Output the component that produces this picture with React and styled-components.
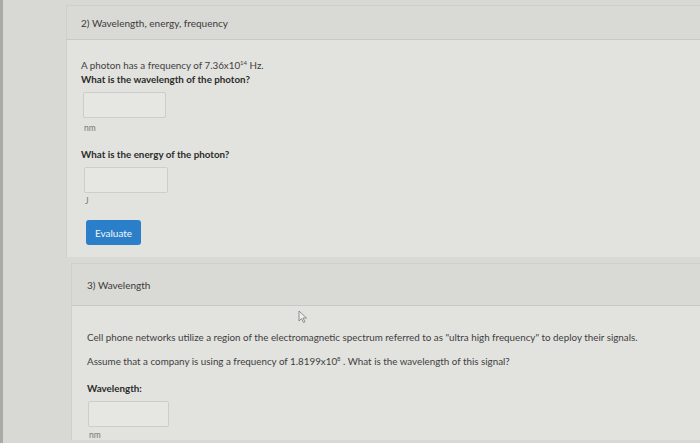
import React from 'react';
import styled, { createGlobalStyle } from 'styled-components';

const Global = createGlobalStyle`
  html, body { margin: 0; padding: 0; }
  body {
    width: 700px;
    height: 443px;
    overflow: hidden;
    background: #d8d8d4;
    font-family: Lato, "Open Sans", sans-serif;
    color: #3a3a3a;
  }
`;

const Page = styled.div`
  display: flex;
  height: 443px;
  border-left: 3px solid #a9a9a6;
  box-sizing: border-box;
`;

const Gutter = styled.div`
  width: ${(p) => p.w}px;
  flex-shrink: 0;
`;

const Column = styled.div`
  flex: 1;
  display: flex;
  flex-direction: column;
  gap: 6px;
  padding-top: 5px;
`;

const Card = styled.section`
  background: #e2e2de;
  border-left: 1px solid #cfcfcb;
  border-top: 1px solid #cfcfcb;
  margin-left: ${(p) => p.indent || 0}px;
`;

const CardHeader = styled.header`
  background: #d9d9d5;
  border-bottom: 1px solid #c8c8c4;
  height: ${(p) => p.h}px;
  display: flex;
  align-items: center;
  padding-left: ${(p) => p.pad}px;
  font-size: 10px;
  color: #3b3b3b;
`;

const CardBody = styled.div`
  padding: ${(p) => p.pad};
  display: flex;
  flex-direction: column;
`;

const Text = styled.p`
  margin: 0;
  font-size: 9.8px;
  line-height: 15px;
  font-weight: ${(p) => (p.bold ? 700 : 400)};
  color: ${(p) => (p.bold ? '#2c2c2c' : '#3e3e3e')};
  margin-top: ${(p) => p.mt || 0}px;
`;

const Input = styled.div`
  width: ${(p) => p.w || 81}px;
  height: 24px;
  border: 1px solid #cdcdc9;
  border-radius: 2px;
  background: #e6e6e2;
  margin-top: ${(p) => p.mt || 0}px;
  margin-left: ${(p) => p.ml || 0}px;
`;

const Unit = styled.span`
  font-size: 8.5px;
  color: #777;
  margin-top: ${(p) => p.mt || 0}px;
  margin-left: ${(p) => p.ml || 0}px;
`;

const Button = styled.button`
  align-self: flex-start;
  margin-top: 14px;
  margin-left: 5px;
  width: 55px;
  height: 25px;
  border: none;
  border-radius: 3px;
  background: #2a7fc8;
  color: #f2f6fb;
  font-family: Lato, "Open Sans", sans-serif;
  font-size: 10px;
  padding: 0;
`;

const Sup = styled.sup`
  font-size: 6px;
`;

const Cursor = styled.svg`
  align-self: flex-start;
  margin-left: 210px;
`;

export default function App() {
  return (
    <>
      <Global />
      <Page>
        <Gutter w={63} />
        <Column>
          <Card>
            <CardHeader h={33} pad={14}>2) Wavelength, energy, frequency</CardHeader>
            <CardBody pad="15px 0 12px 14px">
              <Text>A photon has a frequency of 7.36x10<Sup>14</Sup> Hz.</Text>
              <Text bold mt={-1}>What is the wavelength of the photon?</Text>
              <Input ml={2} mt={5} w={81} />
              <Unit ml={3} mt={5}>nm</Unit>
              <Text bold mt={14}>What is the energy of the photon?</Text>
              <Input ml={3} mt={5} w={82} />
              <Unit ml={4} mt={3}>J</Unit>
              <Button>Evaluate</Button>
            </CardBody>
          </Card>
          <Card indent={5}>
            <CardHeader h={41} pad={15}>3) Wavelength</CardHeader>
            <CardBody pad="4px 0 0 15px">
              <Cursor width="12" height="14" viewBox="0 0 12 14">
                <path d="M2 1 L2 11 L4.5 8.5 L6.5 12.5 L8 11.8 L6 8 L9.5 8 Z" fill="#eee" stroke="#777" strokeWidth="0.8" />
              </Cursor>
              <Text mt={6}>Cell phone networks utilize a region of the electromagnetic spectrum referred to as "ultra high frequency" to deploy their signals.</Text>
              <Text mt={6}>Assume that a company is using a frequency of 1.8199x10<Sup>8</Sup> . What is the wavelength of this signal?</Text>
              <Text bold mt={11}>Wavelength:</Text>
              <Input ml={1} mt={5} w={79} />
              <Unit ml={2} mt={3}>nm</Unit>
            </CardBody>
          </Card>
        </Column>
      </Page>
    </>
  );
}
